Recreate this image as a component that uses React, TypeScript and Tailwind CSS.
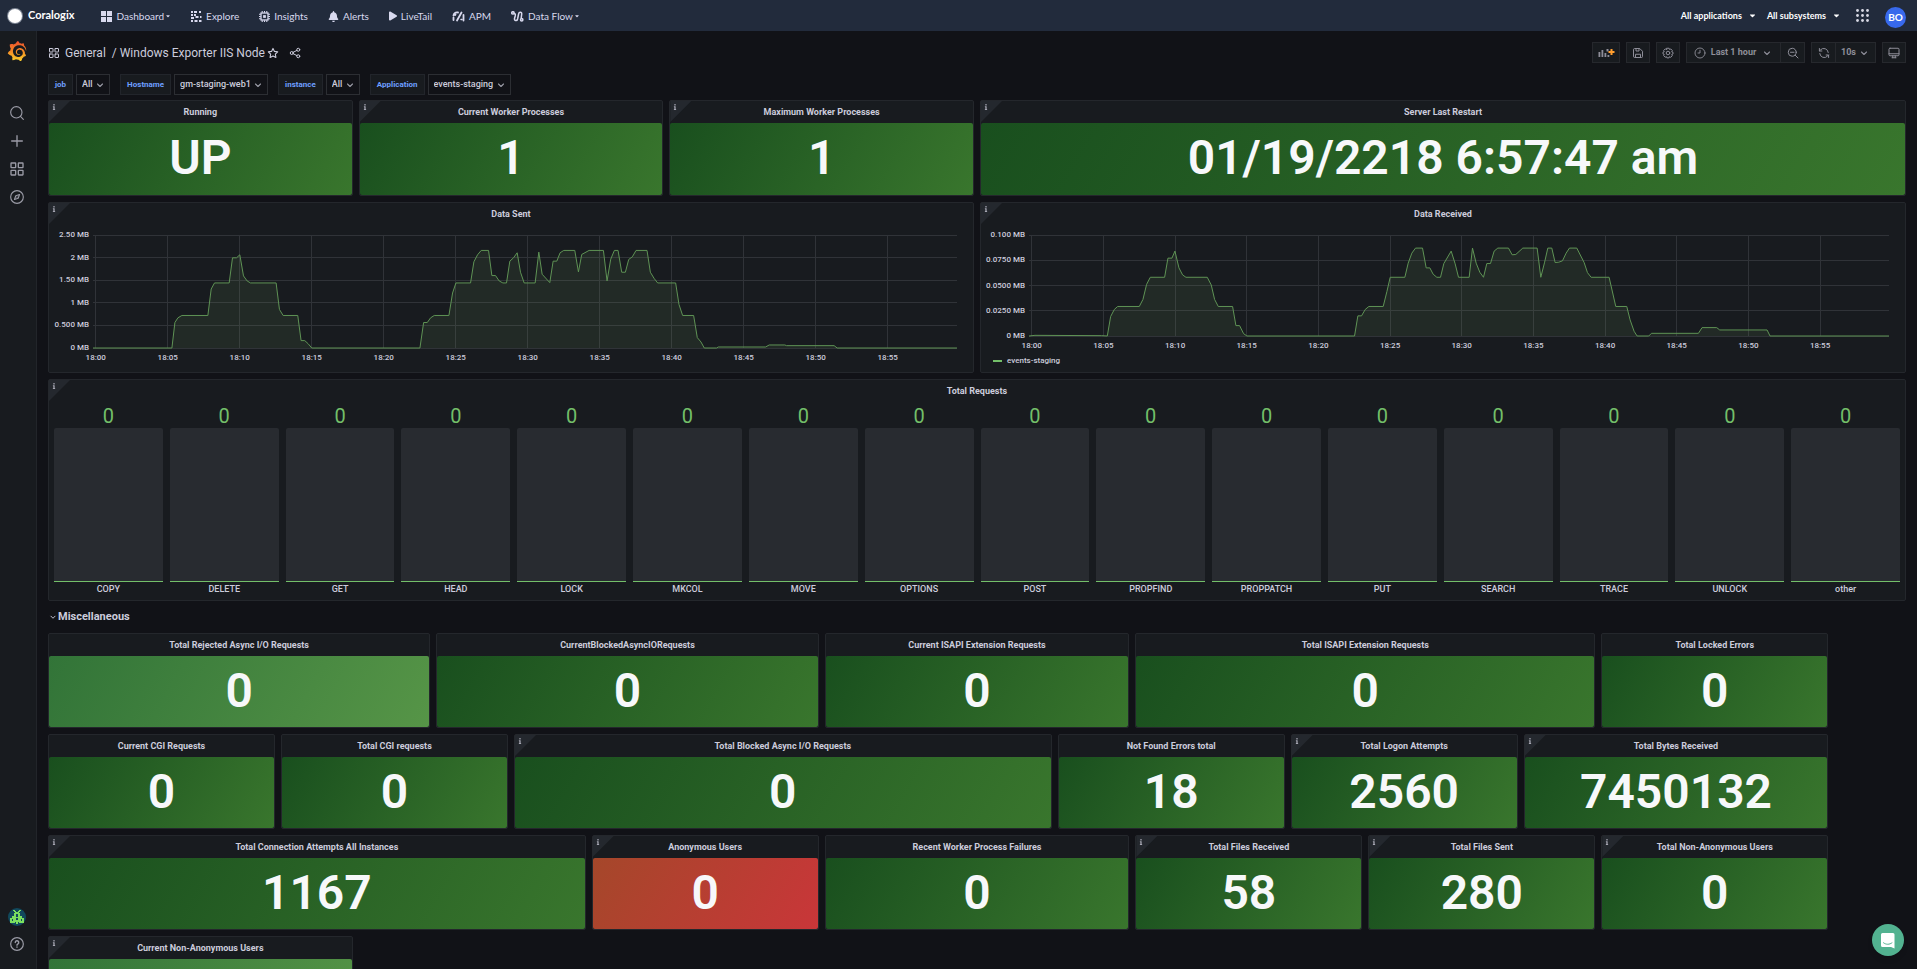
import type { ReactNode } from "react";
import { SiGrafana } from "react-icons/si";
import { FaInfo, FaBell, FaPlay, FaCaretDown } from "react-icons/fa";

/* ---------- icons ---------- */

function Icon({ size = "size-4", stroke = 1.7, children }: { size?: string; stroke?: number; children: ReactNode }) {
  return (
    <svg
      viewBox="0 0 24 24"
      className={`${size} shrink-0 fill-none stroke-current`}
      strokeWidth={stroke}
      strokeLinecap="round"
      strokeLinejoin="round"
      aria-hidden="true"
    >
      {children}
    </svg>
  );
}

const AppsIcon = ({ size }: { size?: string }) => (
  <Icon size={size} stroke={2}>
    <rect x="3" y="3" width="7" height="7" rx="0.6" />
    <rect x="14" y="3" width="7" height="7" rx="0.6" />
    <rect x="3" y="14" width="7" height="7" rx="0.6" />
    <rect x="14" y="14" width="7" height="7" rx="0.6" />
  </Icon>
);
const AngleDown = ({ size = "size-3" }: { size?: string }) => (
  <Icon size={size} stroke={2.2}>
    <path d="M7 10l5 5 5-5" />
  </Icon>
);
const SearchIcon = () => (
  <Icon>
    <circle cx="11" cy="11" r="8.5" />
    <path d="M17.2 17.2L21.5 21.5" />
  </Icon>
);
const PlusIcon = () => (
  <Icon stroke={2}>
    <path d="M12 4v16M4 12h16" />
  </Icon>
);
const CompassIcon = () => (
  <Icon>
    <circle cx="12" cy="12" r="9.5" />
    <path d="M15.8 8.2l-2 5.6-5.6 2 2-5.6z" />
    <path d="M12 12v0.1" />
  </Icon>
);
const HelpIcon = () => (
  <Icon stroke={1.8}>
    <circle cx="12" cy="12" r="9.5" />
    <path d="M9.4 9.6a2.6 2.6 0 1 1 3.7 2.5c-.8.4-1.1.9-1.1 1.6M12 16.6v.1" strokeWidth={2.2} />
  </Icon>
);
const StarIcon = () => (
  <Icon size="size-3" stroke={2.2}>
    <path d="M12 2.8l2.9 6 6.5.9-4.7 4.6 1.1 6.6L12 17.8l-5.8 3.1 1.1-6.6L2.6 9.7l6.5-.9z" />
  </Icon>
);
const ShareIcon = () => (
  <Icon size="size-3" stroke={2}>
    <circle cx="18.5" cy="5.5" r="3" />
    <circle cx="5.5" cy="12" r="3" />
    <circle cx="18.5" cy="18.5" r="3" />
    <path d="M8.3 10.6l7.4-3.7M8.3 13.4l7.4 3.7" />
  </Icon>
);
const SaveIcon = () => (
  <Icon size="size-3" stroke={2}>
    <path d="M3 5a2 2 0 0 1 2-2h10.5L21 8.500V19a2 2 0 0 1-2 2H5a2 2 0 0 1-2-2z" />
    <path d="M8 3v5h6V3M7 21v-6.500h10V21" />
  </Icon>
);
const CogIcon = () => (
  <Icon size="size-3" stroke={2}>
    <path d="M9.700 2.500h4.600l.8 2.600 2.500-1.200 3.100 3.300-1.300 2.400 2.600.9v3.400l-2.600 1.100 1.200 2.500-3.200 3.200-2.400-1.300-.8 2.300H9.700l-.9-2.400-2.400 1.200-3.100-3.200 1.200-2.400-2.500-1v-3.600l2.500-.9-1.200-2.400 3.200-3.200 2.400 1.200z" />
    <circle cx="12" cy="12" r="3.600" />
  </Icon>
);
const ClockIcon = () => (
  <Icon size="size-3" stroke={1.8}>
    <circle cx="12" cy="12" r="10" />
    <path d="M12 6.500V12H8" />
  </Icon>
);
const ZoomOutIcon = () => (
  <Icon size="size-3" stroke={2}>
    <circle cx="10.500" cy="10.500" r="8" />
    <path d="M16.500 16.500L22 22M7 10.500h7" />
  </Icon>
);
const SyncIcon = () => (
  <Icon size="size-3" stroke={2}>
    <path d="M20.500 11A9 9 0 0 0 5 5.800L2.800 8M2.800 3v5h5M3.500 13A9 9 0 0 0 19 18.200l2.200-2.200M21.200 21v-5h-5" />
  </Icon>
);
const MonitorIcon = () => (
  <Icon size="size-3" stroke={2}>
    <rect x="2" y="2.500" width="20" height="15" rx="2" />
    <path d="M2 13.500h20M8 21.500h8M9.500 17.500v4M14.500 17.500v4" />
  </Icon>
);
const AddPanelIcon = () => (
  <svg viewBox="0 0 17 12" className="h-3 w-[17px]" aria-hidden="true">
    <path d="M0.500 5h1.800v5H0.500zM3.500 3h1.800v7H3.500zM6.500 6h1.800v4H6.500zM9.500 8h1.800v2H9.500zM8.500 2h2v2.500h-2z" className="fill-[#8e8e99]" />
    <path d="M13.500 2v6M10.500 5h6" className="stroke-[#ff9d2e]" strokeWidth="2" />
  </svg>
);

/* ---------- top navigation ---------- */

const DashboardGlyph = () => (
  <svg viewBox="0 0 11 11" className="size-[11px] fill-current" aria-hidden="true">
    <path d="M0 0h5v5H0zM6 0h5v5H6zM0 6h5v5H0zM6 6h5v5H6z" />
  </svg>
);
const ExploreGlyph = () => (
  <svg viewBox="0 0 11 11" className="size-[11px] fill-current" aria-hidden="true">
    <path d="M0 0h2v2H0zM3 0h3v2H3zM8 0h2v2H8zM0 3h2v2H0zM3 3h2v2H3zM0 6h3v2H0zM4.500 5h3v2h-3zM0 9h2v2H0zM3.500 9h3v2h-3zM8 9h2.500v2H8zM9 5h1.500v2H9z" />
  </svg>
);
const InsightsGlyph = () => (
  <svg viewBox="0 0 12 12" className="size-[11px]" aria-hidden="true">
    <path
      d="M3.500 0v2M6 0v2M8.500 0v2M3.500 10v2M6 10v2M8.500 10v2M0 3.500h2M0 6h2M0 8.500h2M10 3.500h2M10 6h2M10 8.500h2"
      className="stroke-current"
      strokeWidth="1.200"
    />
    <rect x="2.200" y="2.200" width="7.600" height="7.600" className="fill-none stroke-current" strokeWidth="1.400" />
    <rect x="4.500" y="4.500" width="3" height="3" className="fill-current" />
  </svg>
);
const ApmGlyph = () => (
  <svg viewBox="0 0 13 11" className="h-[11px] w-[13px] fill-none stroke-current" strokeLinecap="round" aria-hidden="true">
    <path d="M1.500 9V6.500M3.500 3.500L3 4M5 9.500l4.500-8" strokeWidth="1.800" />
    <path d="M1.500 4.500A4 4 0 0 1 6 1.500M11.500 4v5.500" strokeWidth="1.800" />
    <path d="M9 8.500h1" strokeWidth="1.500" />
  </svg>
);
const FlowGlyph = () => (
  <svg viewBox="0 0 13 11" className="h-[11px] w-[13px] fill-none stroke-current" strokeWidth="1.500" aria-hidden="true">
    <circle cx="1.900" cy="1.900" r="1.200" />
    <path d="M3 2.500c1.500 0 1.500 1 1.200 2.500L3.500 7.500C3 9.800 6 10.500 6.600 8L7.600 3C8.100.6 11 .8 10.700 3.200L10.200 7" />
    <circle cx="10.700" cy="8.700" r="1.200" />
  </svg>
);

const NAV: { label: string; icon: ReactNode; menu?: boolean }[] = [
  { label: "Dashboard", icon: <DashboardGlyph />, menu: true },
  { label: "Explore", icon: <ExploreGlyph /> },
  { label: "Insights", icon: <InsightsGlyph /> },
  { label: "Alerts", icon: <FaBell className="size-[11px]" /> },
  { label: "LiveTail", icon: <FaPlay className="h-[10px] w-[8px]" /> },
  { label: "APM", icon: <ApmGlyph /> },
  { label: "Data Flow", icon: <FlowGlyph />, menu: true },
];

function TopBar() {
  return (
    <header className="flex h-[31px] shrink-0 items-center justify-between bg-[#222b3c] pl-2 pr-[11px] font-['Lato',sans-serif] text-[10px] text-[#d8d9ee]">
      <div className="flex items-center">
        <a href="#home" className="flex items-center gap-[6px] text-[11px] font-bold text-white">
          <span className="size-[14px] rounded-full bg-white ring-1 ring-[#7d8594]" />
          Coralogix
        </a>
        <nav className="ml-[27px] flex items-center gap-5 pt-px">
          {NAV.map((n) => (
            <a key={n.label} href="#nav" className="flex items-center gap-1 whitespace-nowrap">
              {n.icon}
              <span className="flex items-center gap-px">
                {n.label}
                {n.menu && <FaCaretDown className="size-[6px]" />}
              </span>
            </a>
          ))}
        </nav>
      </div>
      <div className="flex items-center text-white">
        <button type="button" className="mr-[10px] flex items-center gap-[6px] text-[9px] font-bold">
          All applications
          <FaCaretDown className="size-[9px]" />
        </button>
        <button type="button" className="mr-[15px] flex items-center gap-[6px] text-[9px] font-bold">
          All subsystems
          <FaCaretDown className="size-[9px]" />
        </button>
        <button type="button" aria-label="Apps" className="mr-4">
          <svg viewBox="0 0 13 13" className="size-[13px] fill-[#d8d9e4]">
            {[1.5, 6.5, 11.5].map((y) => [1.5, 6.5, 11.5].map((x) => <circle key={`${x}-${y}`} cx={x} cy={y} r="1.400" />))}
          </svg>
        </button>
        <button type="button" className="mt-[3px] flex size-[21px] items-center justify-center rounded-full bg-[#3869ec] text-[10px] font-bold">
          BO
        </button>
      </div>
    </header>
  );
}

/* ---------- side bar ---------- */

function SideBar() {
  return (
    <aside className="flex w-[37px] shrink-0 flex-col items-center justify-between border-r border-[#22252a] bg-[#181b1f] pb-[17px] pr-[2px] pt-[10px] text-[#9a9ba6]">
      <div className="flex flex-col items-center">
        <svg className="absolute size-0" aria-hidden="true">
          <defs>
            <linearGradient id="grafana-fill" x1="0" y1="1" x2="0" y2="0">
              <stop offset="0" stopColor="#fcd02a" />
              <stop offset="0.55" stopColor="#f48226" />
              <stop offset="1" stopColor="#ee4f2e" />
            </linearGradient>
          </defs>
        </svg>
        <a href="#grafana" aria-label="Grafana">
          <SiGrafana className="size-5 [&_path]:fill-[url(#grafana-fill)]" />
        </a>
        <nav className="mt-[44px] flex flex-col gap-3">
          <a href="#search" aria-label="Search"><SearchIcon /></a>
          <a href="#create" aria-label="Create"><PlusIcon /></a>
          <a href="#dashboards" aria-label="Dashboards"><AppsIcon /></a>
          <a href="#explore" aria-label="Explore"><CompassIcon /></a>
        </nav>
      </div>
      <div className="flex flex-col items-center gap-[10px]">
        <a href="#profile" aria-label="Profile">
          <svg viewBox="0 0 18 18" className="size-[18px]">
            <circle cx="9" cy="9" r="9" className="fill-[#11495c]" />
            <path
              d="M5 2h2v1h1v1h2V3h1V2h2v1h-1v1h-1v1h1v3h2v2h2v5h-5v-1h-1v2H8v-2H7v1H2v-5h2V8h2V5h1V4H6V3H5zM8 6v3h2V6zM4 11v2h1v-2zM8 10v2h2v-2zM13 11v2h1v-2z"
              fillRule="evenodd"
              className="fill-[#7be05f]"
            />
          </svg>
        </a>
        <a href="#help" aria-label="Help"><HelpIcon /></a>
      </div>
    </aside>
  );
}

/* ---------- dashboard tool bar ---------- */

const TOOL = "flex h-[21px] items-center justify-center border border-[#26282d] bg-[#181b1f] text-[#8e8e99]";

function ToolBar() {
  return (
    <div className="flex items-center justify-between">
      <div className="flex items-center text-[#ccccdc]">
        <AppsIcon size="size-3" />
        <h1 className="ml-[5px] whitespace-pre text-[12px] leading-4">
          <a href="#general">General</a>
          {"  / "}
          <a href="#dashboard">Windows Exporter IIS Node</a>
        </h1>
        <button type="button" aria-label="Mark as favorite" className="ml-[2px]"><StarIcon /></button>
        <button type="button" aria-label="Share dashboard" className="ml-[10px]"><ShareIcon /></button>
      </div>
      <div className="flex items-center gap-[6px] text-[9px] font-bold">
        <button type="button" aria-label="Add panel" className={`${TOOL} w-7`}><AddPanelIcon /></button>
        <button type="button" aria-label="Save dashboard" className={`${TOOL} w-6`}><SaveIcon /></button>
        <button type="button" aria-label="Dashboard settings" className={`${TOOL} w-6`}><CogIcon /></button>
        <div className="flex">
          <button type="button" className={`${TOOL} w-[95px] gap-[5px]`}>
            <ClockIcon />
            Last 1 hour
            <AngleDown />
          </button>
          <button type="button" aria-label="Zoom out time range" className={`${TOOL} -ml-px w-[25px]`}><ZoomOutIcon /></button>
        </div>
        <div className="flex">
          <button type="button" aria-label="Refresh dashboard" className={`${TOOL} w-[25px]`}><SyncIcon /></button>
          <button type="button" className={`${TOOL} -ml-px w-[41px] gap-[2px]`}>
            10s
            <AngleDown />
          </button>
        </div>
        <button type="button" aria-label="Cycle view mode" className={`${TOOL} w-6`}><MonitorIcon /></button>
      </div>
    </div>
  );
}

const VARIABLES = [
  { id: "job", value: "All" },
  { id: "Hostname", value: "gm-staging-web1" },
  { id: "instance", value: "All" },
  { id: "Application", value: "events-staging" },
];

function Variables() {
  return (
    <div className="mt-[11px] flex gap-[10px]">
      {VARIABLES.map((v) => (
        <div key={v.id} className="flex gap-[3px]">
          <label
            htmlFor={`var-${v.id}`}
            className="flex h-[21px] items-center border border-[#22252b] bg-[#181b1f] px-[6px] text-[8px] font-bold text-[#6e9fff]"
          >
            {v.id}
          </label>
          <div className="relative flex">
            <select
              id={`var-${v.id}`}
              className="h-[21px] appearance-none border border-[#2c2e33] bg-[#111217] pl-[5px] pr-4 text-[9px] font-medium text-[#ccccdc]"
            >
              <option>{v.value}</option>
            </select>
            <span className="pointer-events-none absolute inset-y-0 right-1 flex items-center text-[#9a9ba6]">
              <AngleDown />
            </span>
          </div>
        </div>
      ))}
    </div>
  );
}

/* ---------- panels ---------- */

const SPAN: Record<number, string> = {
  3: "col-span-3",
  4: "col-span-4",
  5: "col-span-5",
  6: "col-span-6",
  7: "col-span-7",
  12: "col-span-12",
  24: "col-span-24",
};

function Panel({ title, span, info, height, children }: { title: string; span: number; info?: boolean; height: string; children: ReactNode }) {
  return (
    <section className={`${SPAN[span]} ${height} relative flex min-w-0 flex-col rounded-xs border border-[#24272c] bg-[#181b1f]`}>
      {info && (
        <span className="absolute left-0 top-0 size-[21px] bg-[#24282e] [clip-path:polygon(0_0,100%_0,0_100%)]">
          <FaInfo className="absolute left-[2px] top-[3px] size-[6px] text-[#a5a6b2]" />
        </span>
      )}
      <h2 className="h-[22px] shrink-0 truncate text-center text-[9px] font-bold leading-[22px] text-[#ccccdc]">{title}</h2>
      {children}
    </section>
  );
}

type Tone = "dark" | "light" | "red";
const TONES: Record<Tone, string> = {
  dark: "bg-[linear-gradient(120deg,#194f1e,#39762d)]",
  light: "bg-[linear-gradient(120deg,#327438,#569547)]",
  red: "bg-[linear-gradient(120deg,#a5472a,#c93639)]",
};

interface StatProps {
  title: string;
  value?: string;
  span: number;
  info?: boolean;
  tone?: Tone;
  height?: string;
}

function Stat({ title, value, span, info, tone = "dark", height = "h-[95px]" }: StatProps) {
  return (
    <Panel title={title} span={span} info={info} height={height}>
      <div className={`${TONES[tone]} flex flex-1 items-center justify-center rounded-xs pb-[2px] text-[48px] font-semibold leading-[56px] text-[#f7f8fa]`}>
        {value}
      </div>
    </Panel>
  );
}

interface ChartProps {
  yLabels: string[];
  points: string;
  viewBox: string;
  base: string;
  height: string;
  axis: string;
}

function Chart({ yLabels, points, viewBox, base, height, axis }: ChartProps) {
  const steps = yLabels.length - 1;
  const tickX = (i: number) => `${((0.19 + i * 5) / 60) * 100}%`;
  return (
    <div className="mt-[10px] flex pr-4">
      <div className={`${axis} ${height} relative shrink-0 text-[8px] font-medium leading-[10px] text-[#ccccdc]`}>
        {yLabels.map((l, i) => (
          <span key={l} className="absolute right-1 -translate-y-1/2 whitespace-nowrap" style={{ top: `${(i / steps) * 100}%` }}>
            {l}
          </span>
        ))}
      </div>
      <svg className={`${height} min-w-0 flex-1 overflow-visible`}>
        <g className="stroke-[#303338]" shapeRendering="crispEdges">
          {yLabels.map((l, i) => (
            <line key={l} x1="0" x2="100%" y1={`${(i / steps) * 100}%`} y2={`${(i / steps) * 100}%`} />
          ))}
          {Array.from({ length: 12 }, (_, i) => (
            <line key={i} x1={tickX(i)} x2={tickX(i)} y1="0" y2="100%" />
          ))}
        </g>
        <svg viewBox={viewBox} preserveAspectRatio="none" width="100%" height="100%" overflow="visible">
          <polygon points={`${points} ${base}`} className="fill-[#7eb26d] opacity-10" />
          <polyline points={points} className="fill-none stroke-[#5f9355]" strokeWidth="1" vectorEffect="non-scaling-stroke" />
        </svg>
        {Array.from({ length: 12 }, (_, i) => (
          <text key={i} x={tickX(i)} y="100%" dy="12" textAnchor="middle" className="fill-[#ccccdc] text-[8px] font-medium">
            {`18:${String(i * 5).padStart(2, "0")}`}
          </text>
        ))}
      </svg>
    </div>
  );
}

const SENT =
  "157,458 394,458 403,382 412,368 424,361 502,361 512,282 522,264 566,264 576,189 588,189 598,180 609,243 620,258 630,264 707,264 717,343 728,361 772,361 782,436 793,436 803,445 814,458 1139,458 1150,382 1161,382 1171,368 1182,361 1226,361 1237,294 1247,264 1291,264 1301,201 1312,180 1323,167 1345,167 1355,242 1366,242 1377,258 1388,264 1399,264 1409,199 1420,189 1431,174 1441,232 1452,264 1485,264 1496,172 1506,238 1529,263 1539,199 1550,199 1560,174 1571,167 1604,167 1615,231 1625,179 1647,167 1690,167 1701,258 1712,193 1723,167 1734,167 1745,232 1756,232 1766,194 1777,186 1788,167 1821,167 1831,232 1842,250 1853,264 1907,264 1917,328 1928,361 1961,361 1972,427 1983,440 1993,458 2030,458 2035,455 2177,455 2188,449 2235,449 2240,451 2383,451 2392,458 2752,458";

const RECEIVED =
  "162,422 180,420 380,421 397,422 407,364 418,343 428,334 493,334 504,313 515,268 526,247 569,247 579,190 591,190 600,169 612,219 623,240 633,247 697,247 709,270 719,313 730,334 773,334 783,391 794,391 806,415 816,422 1139,422 1149,362 1160,362 1171,343 1182,334 1225,334 1236,290 1246,247 1290,247 1300,205 1311,175 1322,160 1343,160 1354,219 1365,219 1375,238 1386,247 1397,247 1407,206 1429,169 1441,207 1451,247 1483,247 1493,160 1504,205 1515,232 1526,247 1536,206 1547,206 1558,169 1569,160 1601,160 1612,180 1623,179 1644,160 1687,160 1698,247 1709,204 1719,160 1731,160 1741,203 1752,202 1763,198 1774,175 1784,160 1806,160 1828,203 1838,233 1849,247 1903,247 1923,334 1956,334 1966,374 1978,408 1987,422 2022,422 2030,414 2171,414 2182,397 2226,397 2235,404 2377,404 2386,422 2743,422";

const METHODS = ["COPY", "DELETE", "GET", "HEAD", "LOCK", "MKCOL", "MOVE", "OPTIONS", "POST", "PROPFIND", "PROPPATCH", "PUT", "SEARCH", "TRACE", "UNLOCK", "other"];

const MISC: (StatProps & { last?: boolean })[] = [
  { title: "Total Rejected Async I/O Requests", value: "0", span: 5, tone: "light" },
  { title: "CurrentBlockedAsyncIORequests", value: "0", span: 5 },
  { title: "Current ISAPI Extension Requests", value: "0", span: 4 },
  { title: "Total ISAPI Extension Requests", value: "0", span: 6 },
  { title: "Total Locked Errors", value: "0", span: 3, last: true },
  { title: "Current CGI Requests", value: "0", span: 3 },
  { title: "Total CGI requests", value: "0", span: 3 },
  { title: "Total Blocked Async I/O Requests", value: "0", span: 7, info: true },
  { title: "Not Found Errors total", value: "18", span: 3 },
  { title: "Total Logon Attempts", value: "2560", span: 3, info: true },
  { title: "Total Bytes Received", value: "7450132", span: 4, info: true, last: true },
  { title: "Total Connection Attempts All Instances", value: "1167", span: 7, info: true },
  { title: "Anonymous Users", value: "0", span: 3, info: true, tone: "red" },
  { title: "Recent Worker Process Failures", value: "0", span: 4 },
  { title: "Total Files Received", value: "58", span: 3, info: true },
  { title: "Total Files Sent", value: "280", span: 3, info: true },
  { title: "Total Non-Anonymous Users", value: "0", span: 3, info: true, last: true },
  { title: "Current Non-Anonymous Users", span: 4, info: true, tone: "light" },
];

export default function App() {
  return (
    <div className="flex h-screen flex-col overflow-hidden bg-[#111217] font-['Roboto',sans-serif]">
      <TopBar />
      <div className="flex min-h-0 flex-1">
        <SideBar />
        <main className="min-w-0 flex-1 overflow-hidden px-[11px] pt-[11px]">
          <ToolBar />
          <Variables />
          <div className="mt-[5px] grid grid-cols-24 gap-[6px]">
            <Stat title="Running" value="UP" span={4} info height="h-24" />
            <Stat title="Current Worker Processes" value="1" span={4} info height="h-24" />
            <Stat title="Maximum Worker Processes" value="1" span={4} info height="h-24" />
            <Stat title="Server Last Restart" value="01/19/2218 6:57:47 am" span={12} info height="h-24" />

            <Panel title="Data Sent" span={12} info height="h-[171px]">
              <Chart
                yLabels={["2.50 MB", "2 MB", "1.50 MB", "1 MB", "0.500 MB", "0 MB"]}
                points={SENT}
                viewBox="157 121 2595 337"
                base="2752,458 157,458"
                height="h-[113px]"
                axis="w-11"
              />
            </Panel>
            <Panel title="Data Received" span={12} info height="h-[171px]">
              <Chart
                yLabels={["0.100 MB", "0.0750 MB", "0.0500 MB", "0.0250 MB", "0 MB"]}
                points={RECEIVED}
                viewBox="162 121 2581 301"
                base="2743,422 162,422"
                height="h-[101px]"
                axis="w-12"
              />
              <div className="mt-5 flex items-center gap-[5px] pl-3 text-[8px] font-medium leading-[10px] text-[#ccccdc]">
                <span className="h-[2px] w-[9px] bg-[#73bf69]" />
                events-staging
              </div>
            </Panel>

            <Panel title="Total Requests" span={24} info height="h-[222px]">
              <div className="flex gap-[7px] px-[5px]">
                {METHODS.map((m) => (
                  <div key={m} className="flex min-w-0 flex-1 flex-col text-center">
                    <span className="h-[26px] text-[20px] leading-[28px] text-[#73bf69]">0</span>
                    <span className="h-[154px] rounded-t-xs border-b border-[#73bf69] bg-[#282b30]" />
                    <span className="text-[9px] font-medium leading-[14px] text-[#ccccdc]">{m}</span>
                  </div>
                ))}
              </div>
            </Panel>

            <h2 className="col-span-24 h-5 text-[11px] font-bold leading-[20px] text-[#ccccdc]">
              <button type="button" className="flex items-center">
                <AngleDown size="size-[10px]" />
                Miscellaneous
              </button>
            </h2>

            {MISC.map(({ last, ...stat }) => [
              <Stat key={stat.title} {...stat} />,
              last && <span key={`${stat.title}-end`} className="col-span-1" />,
            ])}
          </div>
        </main>
      </div>
      <button
        type="button"
        aria-label="Open chat"
        className="fixed bottom-[13px] right-[13px] flex size-8 items-center justify-center rounded-full bg-[#52b290] shadow-md"
      >
        <svg viewBox="0 0 16 17" className="h-[17px] w-4">
          <path d="M2.500 1h10.500a1.500 1.500 0 0 1 1.500 1.500V16.500l-3.500-1.500H2.500A1.500 1.500 0 0 1 1 13.500v-11A1.500 1.500 0 0 1 2.500 1z" className="fill-white" />
          <path d="M3.500 10.800c2.500 2 6 2 8.500 0" className="fill-none stroke-[#52b290]" strokeLinecap="round" />
        </svg>
      </button>
    </div>
  );
}
